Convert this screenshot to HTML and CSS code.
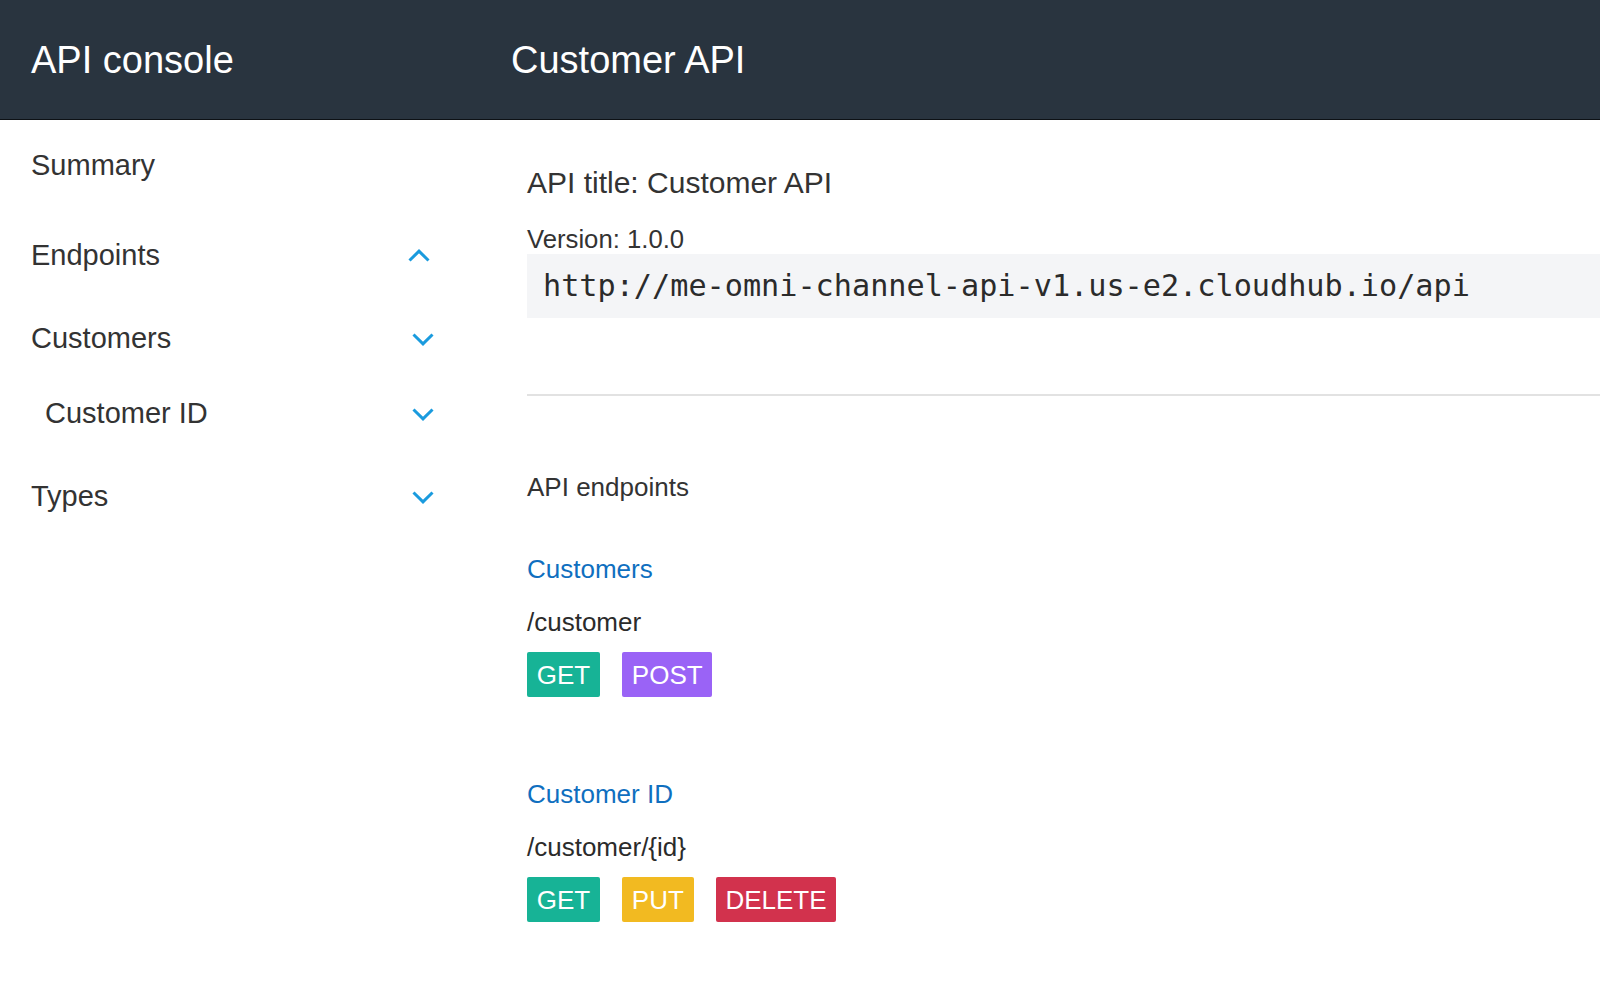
FILE: index.html
```html
<!DOCTYPE html>
<html lang="en">
<head>
<meta charset="utf-8">
<title>API console</title>
<link rel="stylesheet" href="styles.css">
</head>
<body>
<header class="topbar">
  <div class="brand">API console</div>
  <div class="api-name">Customer API</div>
</header>
<div class="layout">
  <nav class="sidebar">
    <div class="nav-item nav-summary"><span>Summary</span></div>
    <div class="nav-item nav-endpoints"><span>Endpoints</span>
      <svg class="chev chev-up" viewBox="0 0 22 13" width="22" height="13"><polyline points="1.5,11.5 11,2.2 20.5,11.5"/></svg>
    </div>
    <div class="nav-item nav-customers"><span>Customers</span>
      <svg class="chev" viewBox="0 0 22 13" width="22" height="13"><polyline points="1.5,1.5 11,10.8 20.5,1.5"/></svg>
    </div>
    <div class="nav-item nav-sub"><span>Customer ID</span>
      <svg class="chev" viewBox="0 0 22 13" width="22" height="13"><polyline points="1.5,1.5 11,10.8 20.5,1.5"/></svg>
    </div>
    <div class="nav-item nav-types"><span>Types</span>
      <svg class="chev" viewBox="0 0 22 13" width="22" height="13"><polyline points="1.5,1.5 11,10.8 20.5,1.5"/></svg>
    </div>
  </nav>
  <main class="content">
    <h1 class="api-title">API title: Customer API</h1>
    <div class="version">Version: 1.0.0</div>
    <div class="base-uri">http://me-omni-channel-api-v1.us-e2.cloudhub.io/api</div>
    <hr class="divider">
    <h2 class="section-title">API endpoints</h2>
    <section class="endpoint endpoint-first">
      <a class="endpoint-name">Customers</a>
      <div class="endpoint-path">/customer</div>
      <div class="methods">
        <span class="badge get">GET</span>
        <span class="badge post">POST</span>
      </div>
    </section>
    <section class="endpoint">
      <a class="endpoint-name">Customer ID</a>
      <div class="endpoint-path">/customer/{id}</div>
      <div class="methods">
        <span class="badge get">GET</span>
        <span class="badge put">PUT</span>
        <span class="badge delete">DELETE</span>
      </div>
    </section>
  </main>
</div>
</body>
</html>
```
FILE: styles.css
```css
html, body {
  margin: 0;
  padding: 0;
  background: #ffffff;
}
body {
  font-family: "Liberation Sans", Arial, Helvetica, sans-serif;
  color: #333333;
  overflow: hidden;
}
.topbar {
  height: 118px;
  padding-top: 1px;
  background: #29343f;
  border-bottom: 1px solid #0d1115;
  display: flex;
  align-items: center;
  color: #ffffff;
  font-size: 38px;
}
.brand {
  width: 480px;
  padding-left: 31px;
}
.api-name {
  flex: 1;
}
.layout {
  display: grid;
  grid-template-columns: 496px 1fr;
}
.sidebar {
  padding: 25px 62px 0 31px;
  display: flex;
  flex-direction: column;
}
.nav-item {
  height: 40px;
  display: flex;
  align-items: center;
  justify-content: space-between;
  font-size: 29px;
  color: #333333;
}
.nav-endpoints { margin-top: 50px; }
.nav-customers { margin-top: 43px; }
.nav-sub { margin-top: 35px; padding-left: 14px; }
.nav-types { margin-top: 43px; }
.chev {
  flex: none;
  fill: none;
  stroke: #1a9bde;
  stroke-width: 3;
  margin-top: 3px;
}
.chev-up {
  margin-right: 4px;
  margin-top: 0;
}
.content {
  padding-top: 45px;
  padding-left: 31px;
}
.api-title {
  margin: 0;
  font-weight: normal;
  font-size: 30px;
  line-height: 36px;
}
.version {
  margin-top: 23px;
  font-size: 25.7px;
  line-height: 30px;
}
.base-uri {
  height: 64px;
  line-height: 63px;
  background: #f4f5f7;
  padding-left: 16px;
  font-family: "DejaVu Sans Mono", "Liberation Mono", monospace;
  font-size: 30.2px;
  color: #2b2b2b;
  white-space: nowrap;
}
.divider {
  margin: 76px 0 0 0;
  border: 0;
  height: 2px;
  background: #e2e2e2;
}
.section-title {
  margin: 76px 0 0 0;
  font-weight: normal;
  font-size: 26px;
  line-height: 30px;
}
.endpoint {
  margin-top: 82px;
}
.endpoint-first {
  margin-top: 52px;
}
.endpoint-name {
  display: block;
  color: #0f6fbf;
  font-size: 26px;
  line-height: 30px;
}
.endpoint-path {
  margin-top: 23px;
  font-size: 26px;
  line-height: 30px;
  color: #2b2b2b;
}
.methods {
  margin-top: 15px;
  display: flex;
  gap: 22px;
}
.badge {
  height: 45px;
  line-height: 46px;
  padding: 0 9.8px;
  color: #ffffff;
  font-size: 26px;
  border-radius: 2px;
}
.get { background: #17b396; }
.post { background: #9a63f6; }
.put { background: #f2ba21; }
.delete { background: #d2324d; }
```
